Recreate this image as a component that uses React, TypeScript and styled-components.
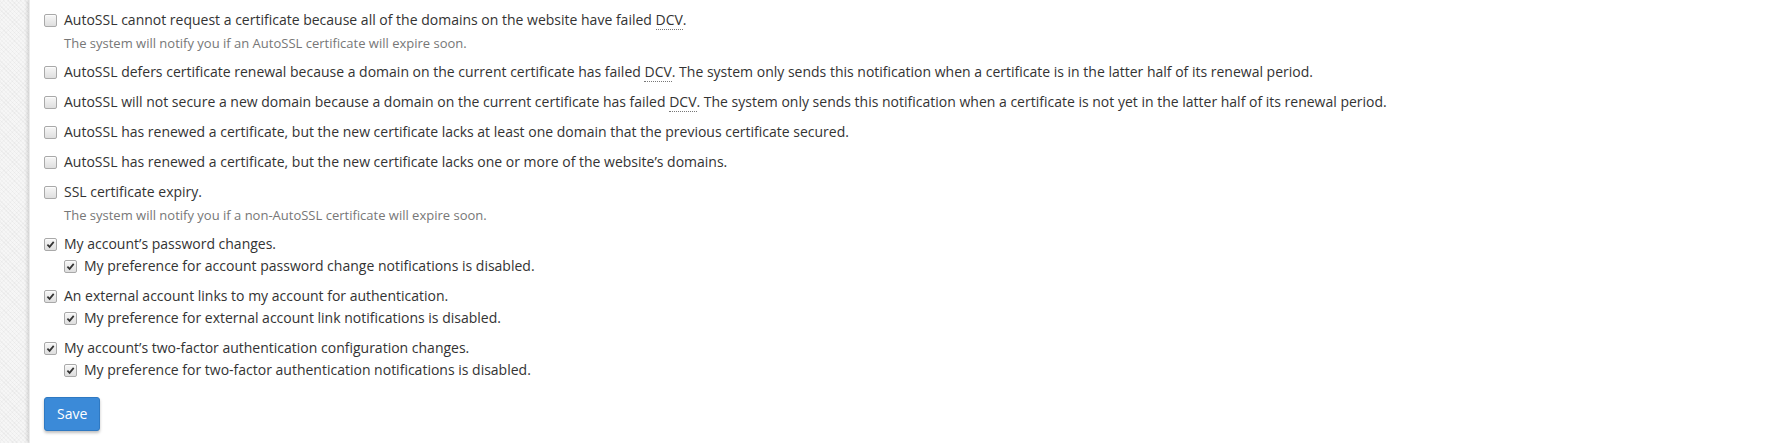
import React from "react";
import styled, { createGlobalStyle } from "styled-components";

const Global = createGlobalStyle`
  html, body { margin: 0; padding: 0; background: #fff; }
  body {
    font-family: "Open Sans", "Liberation Sans", Arial, sans-serif;
    font-size: 14px;
    line-height: 20px;
    color: #333;
  }
`;

const Page = styled.div`
  display: flex;
  min-height: 443px;
`;

const Gutter = styled.div`
  width: 29px;
  flex: none;
  background-color: #f6f6f6;
  background-image: repeating-linear-gradient(
      45deg,
      rgba(0, 0, 0, 0.03) 0px,
      rgba(0, 0, 0, 0.03) 1px,
      transparent 1px,
      transparent 3px
    ),
    repeating-linear-gradient(
      -45deg,
      rgba(0, 0, 0, 0.02) 0px,
      rgba(0, 0, 0, 0.02) 1px,
      transparent 1px,
      transparent 3px
    );
`;

const Main = styled.main`
  flex: 1;
  background: #fff;
  padding: 0 14px;
  box-shadow: -2px 0 3px rgba(0, 0, 0, 0.12);
  border-left: 1px solid #ececec;
  display: flow-root;
`;

const Row = styled.div`
  margin: 10px 0;
`;

const SubRow = styled.div`
  margin: 2px 0 0 20px;
`;

const Label = styled.label`
  display: flex;
  align-items: flex-start;
  gap: 7px;
  white-space: nowrap;
  cursor: pointer;
`;

const Box = styled.span`
  flex: none;
  position: relative;
  width: 11px;
  height: 11px;
  margin-top: 4px;
  border: 1px solid #a9a9a9;
  border-radius: 2px;
  background: linear-gradient(#f7f7f7, #dedede);
  box-shadow: inset 0 1px 0 rgba(255, 255, 255, 0.7);
`;

const Check = styled.svg`
  position: absolute;
  left: 1px;
  top: 1px;
  width: 9px;
  height: 9px;
`;

const Abbr = styled.abbr`
  text-decoration: none;
  border-bottom: 1px dotted #777;
  cursor: help;
`;

const Help = styled.p`
  margin: 5px 0 10px;
  padding-left: 20px;
  font-size: 13px;
  line-height: 17px;
  color: #777;
`;

const Actions = styled.div`
  margin-top: 17px;
`;

const SaveButton = styled.button`
  font-family: inherit;
  font-size: 14px;
  line-height: 20px;
  padding: 6px 12px;
  height: 34px;
  width: 56px;
  color: #fff;
  background: #3b8ad8;
  border: 1px solid #2f79c2;
  border-radius: 3px;
  box-shadow: 0 2px 3px rgba(0, 0, 0, 0.25);
  cursor: pointer;
`;

const CheckBox: React.FC<{ checked?: boolean }> = ({ checked }) => (
  <Box role="checkbox" aria-checked={!!checked}>
    {checked && (
      <Check viewBox="0 0 9 9">
        <path d="M1.4 4.7 L3.6 6.9 L7.7 1.9" fill="none" stroke="#333" strokeWidth="1.7" />
      </Check>
    )}
  </Box>
);

const dcv = <Abbr title="Domain Control Validation">DCV</Abbr>;

type Item = {
  label: React.ReactNode;
  checked?: boolean;
  help?: string;
  sub?: string;
};

const items: Item[] = [
  {
    label: <>AutoSSL cannot request a certificate because all of the domains on the website have failed {dcv}.</>,
    help: "The system will notify you if an AutoSSL certificate will expire soon.",
  },
  {
    label: (
      <>
        AutoSSL defers certificate renewal because a domain on the current certificate has failed {dcv}. The system only
        sends this notification when a certificate is in the latter half of its renewal period.
      </>
    ),
  },
  {
    label: (
      <>
        AutoSSL will not secure a new domain because a domain on the current certificate has failed {dcv}. The system
        only sends this notification when a certificate is not yet in the latter half of its renewal period.
      </>
    ),
  },
  { label: "AutoSSL has renewed a certificate, but the new certificate lacks at least one domain that the previous certificate secured." },
  { label: "AutoSSL has renewed a certificate, but the new certificate lacks one or more of the website’s domains." },
  { label: "SSL certificate expiry.", help: "The system will notify you if a non-AutoSSL certificate will expire soon." },
  {
    label: "My account’s password changes.",
    checked: true,
    sub: "My preference for account password change notifications is disabled.",
  },
  {
    label: "An external account links to my account for authentication.",
    checked: true,
    sub: "My preference for external account link notifications is disabled.",
  },
  {
    label: "My account’s two-factor authentication configuration changes.",
    checked: true,
    sub: "My preference for two-factor authentication notifications is disabled.",
  },
];

export default function App() {
  return (
    <>
      <Global />
      <Page>
        <Gutter />
        <Main>
          {items.map((it, i) => (
            <Row key={i}>
              <Label>
                <CheckBox checked={it.checked} />
                <span>{it.label}</span>
              </Label>
              {it.help && <Help>{it.help}</Help>}
              {it.sub && (
                <SubRow>
                  <Label>
                    <CheckBox checked />
                    <span>{it.sub}</span>
                  </Label>
                </SubRow>
              )}
            </Row>
          ))}
          <Actions>
            <SaveButton type="button">Save</SaveButton>
          </Actions>
        </Main>
      </Page>
    </>
  );
}
